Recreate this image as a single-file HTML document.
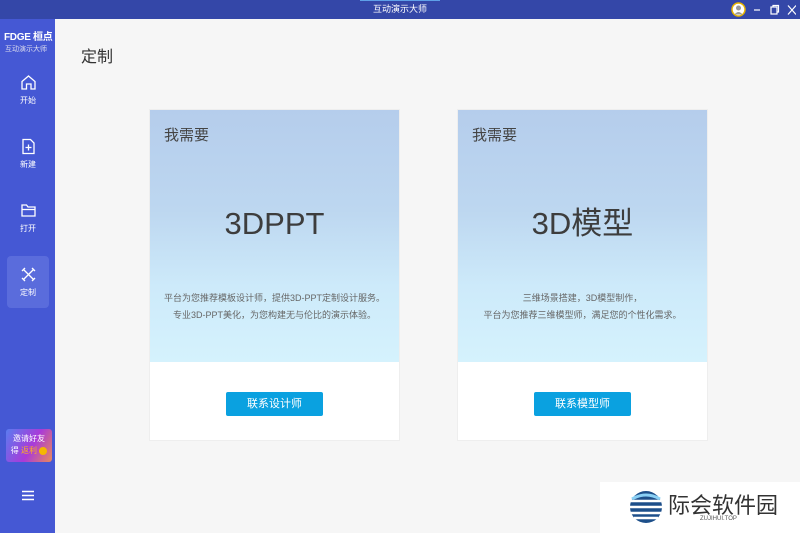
<!DOCTYPE html>
<html><head><meta charset="utf-8"><style>
*{margin:0;padding:0;box-sizing:border-box}
body{width:800px;height:533px;overflow:hidden;background:#f6f6f6;font-family:"Liberation Sans","Noto Sans CJK SC",sans-serif;position:relative}
.tb{position:absolute;left:0;top:0;width:800px;height:19px;background:#3447a8;color:#fff;font-size:9px;text-align:center;line-height:19px}
.tb .ln{position:absolute;left:360px;top:0;width:80px;height:1px;background:#5fa0e8}
.sb{position:absolute;left:0;top:19px;width:55px;height:514px;background:#4558d4;color:#fff}
.logo{position:absolute;left:4px;top:9px;font-size:10px;font-weight:bold;white-space:nowrap;letter-spacing:-0.3px}
.logo2{position:absolute;left:5px;top:25px;font-size:7px;color:#dde;white-space:nowrap}
.it{position:absolute;left:7px;width:42px;height:52px;text-align:center;font-size:8px;border-radius:4px}
.it svg{display:block;margin:10px auto 4px}
.main-title{position:absolute;left:81px;top:43px;font-size:16px;color:#333}
.card{position:absolute;top:109px;width:251px;height:332px;background:#fff;border:1px solid #eee}
.grad{height:252px;background:linear-gradient(#b5cdec 0%,#bdd7f0 40%,#cdeafa 70%,#d5f2fd 100%);position:relative}
.need{position:absolute;left:14px;top:14px;font-size:15px;color:#444}
.big{position:absolute;left:0;right:0;top:96px;text-align:center;font-size:31px;line-height:36px;color:#3d3d3d}
.desc{position:absolute;left:0;right:0;top:180px;text-align:center;font-size:9px;color:#666;line-height:17px}
.btn{position:absolute;left:76px;top:282px;width:97px;height:24px;background:#0aa1e0;border-radius:2px;color:#fff;font-size:11px;text-align:center;line-height:24px}
.inv{position:absolute;left:6px;top:410px;width:46px;height:33px;border-radius:3px;background:linear-gradient(120deg,#5a7cf0,#a93ad9 55%,#e98a5a);color:#fff;font-size:8px;text-align:center;line-height:12px;padding-top:4px}
.wm{position:absolute;left:600px;top:482px;width:200px;height:51px;background:#fff}
</style></head><body>
<div class="tb"><div class="ln"></div>互动演示大师
<svg style="position:absolute;left:731px;top:2px" width="15" height="15"><circle cx="7.5" cy="7.5" r="6.5" fill="#fff" stroke="#e8b400" stroke-width="1.5"/><circle cx="7.5" cy="6" r="2.5" fill="#999"/><path d="M3.5 12.5 Q7.5 7.5 11.5 12.5" fill="#999"/></svg>
<svg style="position:absolute;left:752px;top:4px" width="44" height="12" stroke="#fff" fill="none" stroke-width="1.2"><path d="M2 6h6"/><rect x="19" y="3" width="6" height="7"/><path d="M21 3V1.5h5.5V8H25"/><path d="M36 1.5l8 9M44 1.5l-8 9"/></svg>
</div>
<div class="sb">
<div class="logo">FDGE 桓点</div>
<div class="logo2">互动演示大师</div>
<div class="it" style="top:45px"><svg width="17" height="17" fill="none" stroke="#fff" stroke-width="1.3"><path d="M2 7.5L8.5 2l6.5 5.5V15h-4V10H6.5v5H2z"/></svg>开始</div>
<div class="it" style="top:109px"><svg width="17" height="17" fill="none" stroke="#fff" stroke-width="1.3"><path d="M3 1.5h7.5l3.5 3.5v10.5H3z"/><path d="M8.5 6.5v6M5.5 9.5h6"/></svg>新建</div>
<div class="it" style="top:173px"><svg width="17" height="17" fill="none" stroke="#fff" stroke-width="1.3"><path d="M2 3h4.5l1.5 2H15v9H2z"/><path d="M2 7.5h13"/></svg>打开</div>
<div class="it" style="top:237px;background:#5a6cdc"><svg width="17" height="17" fill="none" stroke="#fff" stroke-width="1.3"><path d="M3 3l11 11M3 14L14 3M2 5l3-3M12 15l3-3M12 2l3 3M2 12l3 3"/></svg>定制</div>
<div class="inv">邀请好友<br>得 <span style="color:#ffb020">返利</span> <span style="display:inline-block;width:8px;height:8px;border-radius:50%;background:#f5b800;vertical-align:middle"></span></div>
<svg style="position:absolute;left:22px;top:471px" width="12" height="11" stroke="#fff" stroke-width="1.5"><path d="M0 1.5h12M0 5.5h12M0 9.5h12"/></svg>
</div>
<div class="main-title">定制</div>
<div class="card" style="left:149px"><div class="grad"><div class="need">我需要</div><div class="big">3DPPT</div><div class="desc">平台为您推荐模板设计师，提供3D-PPT定制设计服务。<br>专业3D-PPT美化，为您构建无与伦比的演示体验。</div></div><div class="btn">联系设计师</div></div>
<div class="card" style="left:457px"><div class="grad"><div class="need">我需要</div><div class="big">3D模型</div><div class="desc">三维场景搭建，3D模型制作，<br>平台为您推荐三维模型师，满足您的个性化需求。</div></div><div class="btn">联系模型师</div></div>
<div class="wm">
<svg style="position:absolute;left:28px;top:7px" width="36" height="36"><circle cx="18" cy="18" r="16" fill="#1d4f8a"/><path d="M3 12h30M2 18h32M3 24h30M6 29h24" stroke="#fff" stroke-width="2.5"/><path d="M4 10Q18 2 32 10" stroke="#8ad0f5" stroke-width="3" fill="none"/></svg>
<div style="position:absolute;left:68px;top:6px;font-size:22px;color:#333">际会软件园</div>
<div style="position:absolute;left:100px;top:34px;font-size:6px;color:#555">ZUJIHUI.TOP</div>
</div>
</body></html>
